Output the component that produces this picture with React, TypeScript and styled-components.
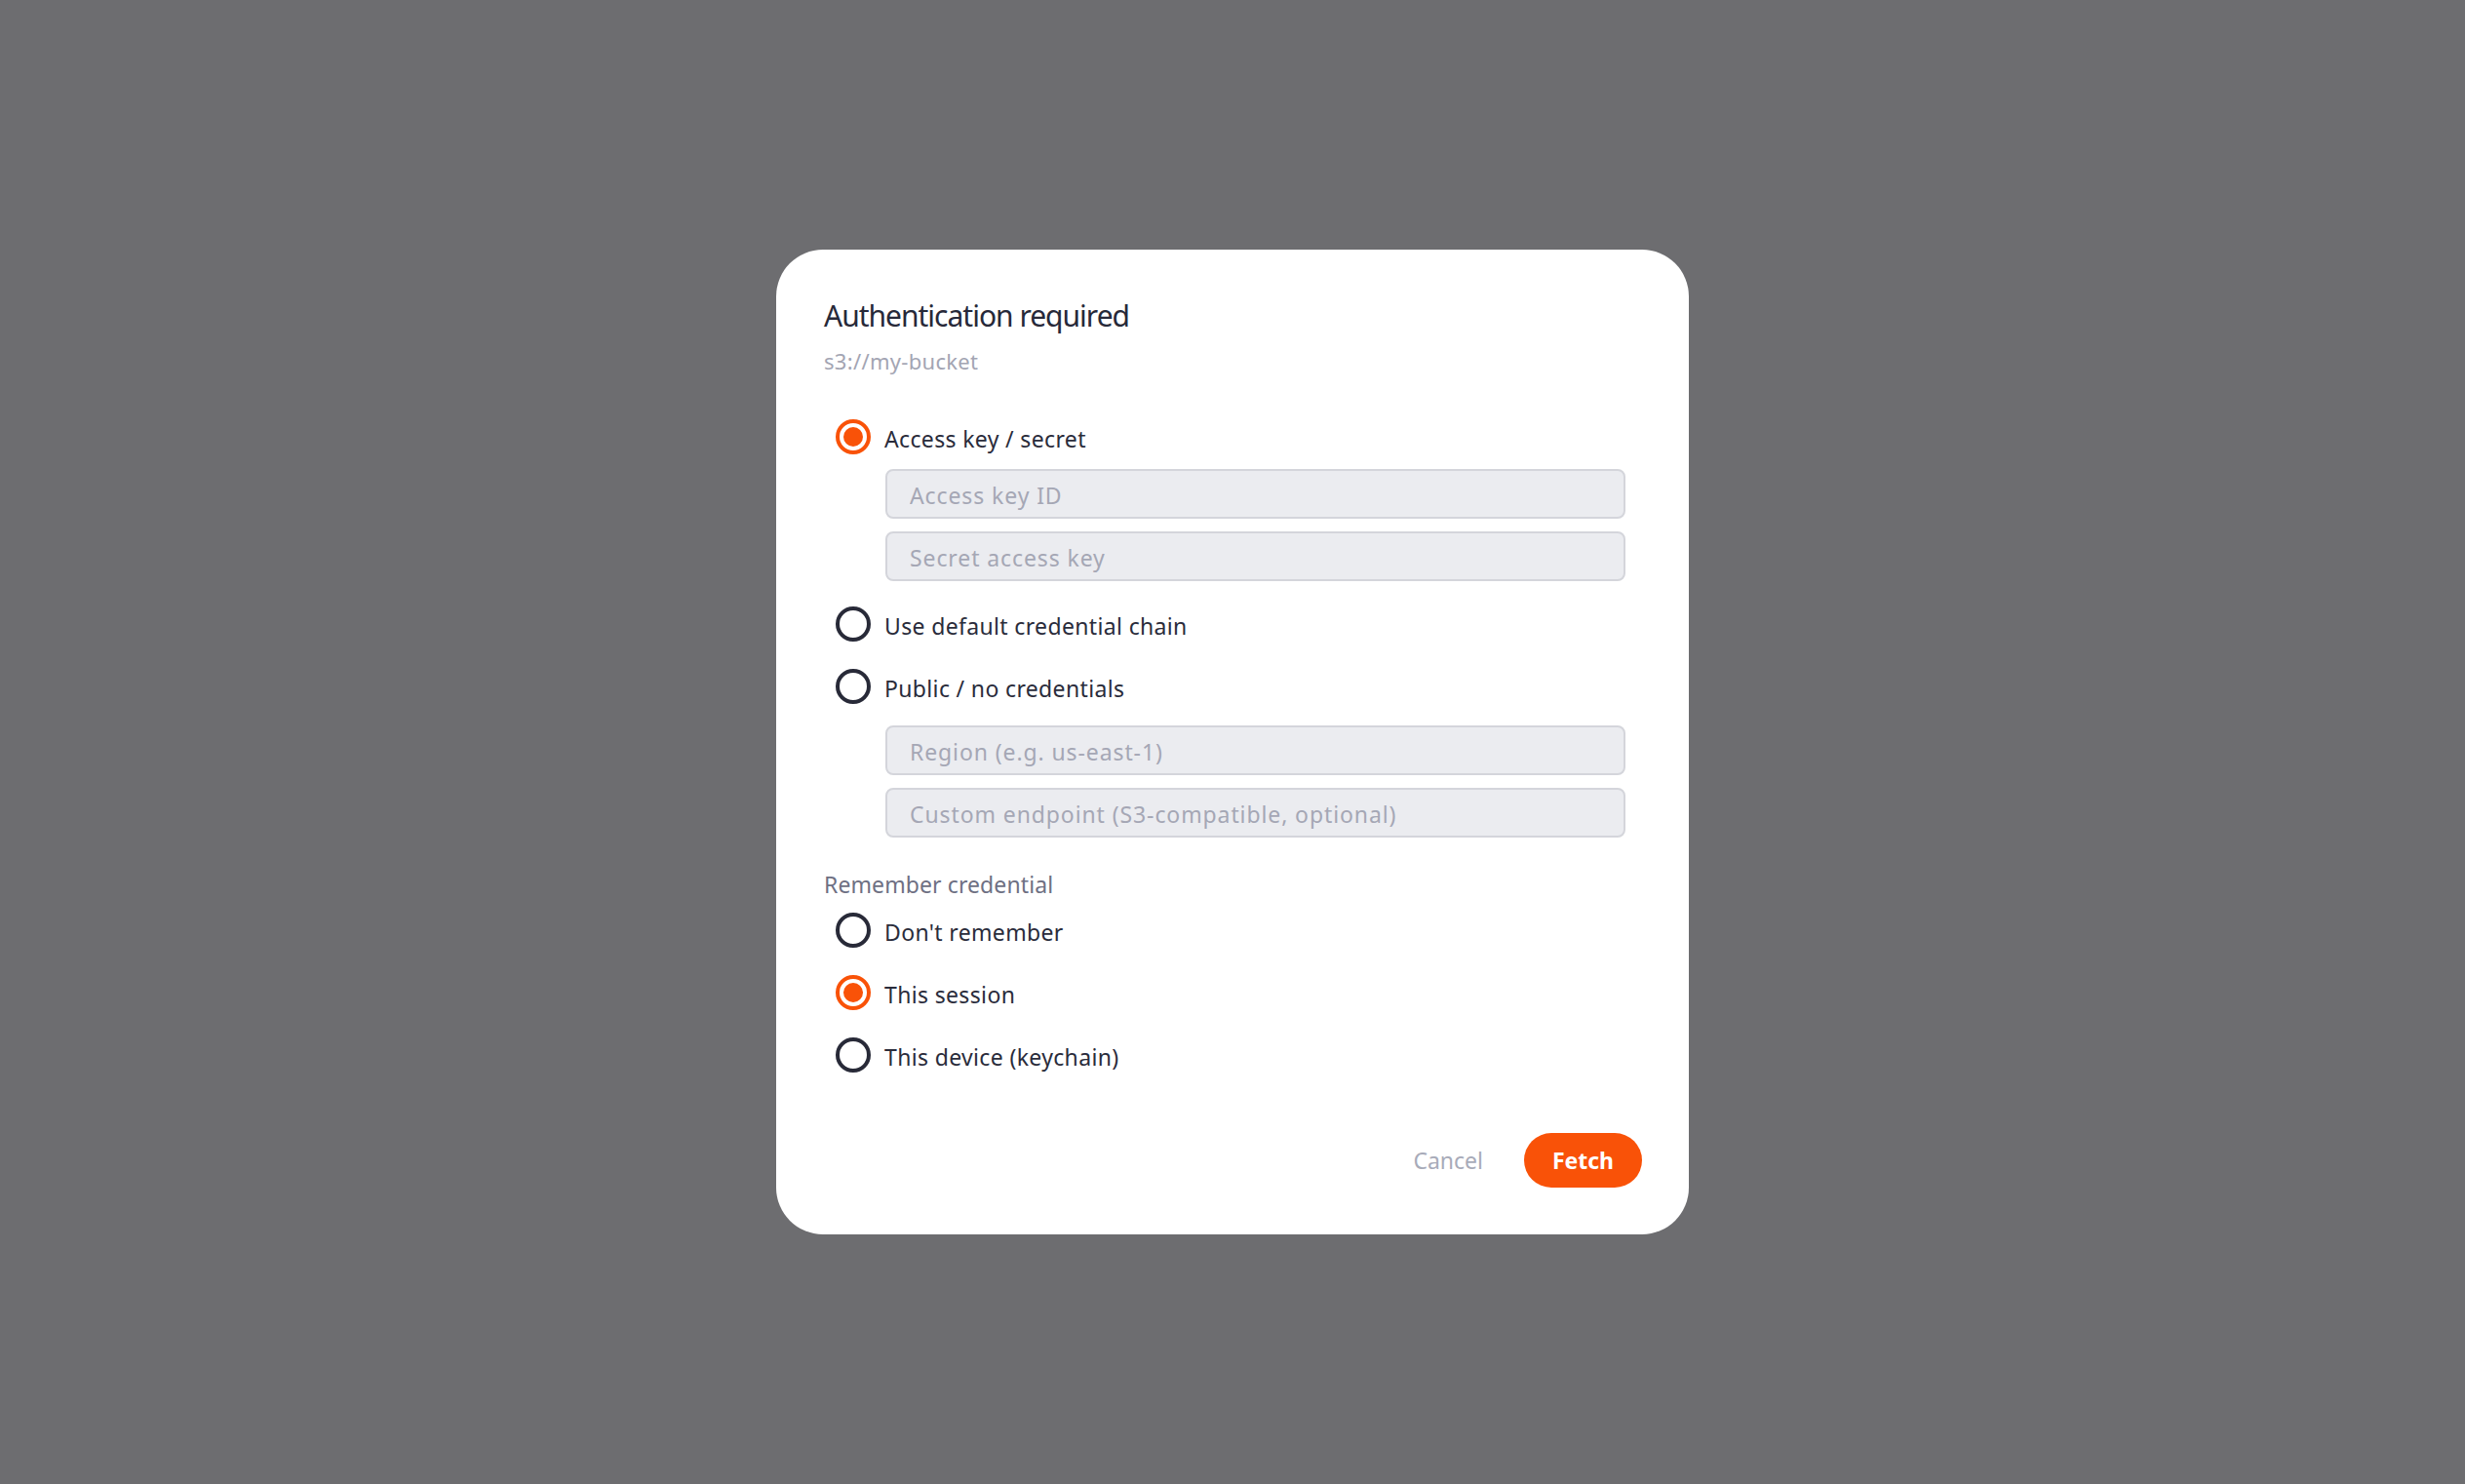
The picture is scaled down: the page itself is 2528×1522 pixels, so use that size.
import React, { FC, useState } from "react";
import styled, { createGlobalStyle } from "styled-components";

const GlobalStyle = createGlobalStyle`
    html, body {
        margin: 0;
        padding: 0;
        height: 100%;
    }
    body {
        background: #6d6d70;
        font-family: "Noto Sans", "Open Sans", sans-serif;
    }
    #root {
        min-height: 100vh;
        display: flex;
        align-items: center;
        justify-content: center;
    }
`;

const Dialog = styled.div`
    width: 936px;
    box-sizing: border-box;
    padding: 48px 48px 48px 49px;
    background: #ffffff;
    border-radius: 48px;
    display: flex;
    flex-direction: column;
`;

const Title = styled.h1`
    margin: 0;
    font-size: 30px;
    line-height: 40px;
    font-weight: 400;
    letter-spacing: -1px;
    color: #272939;
`;

const Subtitle = styled.div`
    margin-top: 11px;
    font-size: 22px;
    line-height: 30px;
    letter-spacing: 0.3px;
    color: #a3a5b3;
`;

const Options = styled.div<{ $top: number }>`
    margin-top: ${(p) => p.$top}px;
    display: flex;
    flex-direction: column;
`;

const Row = styled.label<{ $gap?: number }>`
    display: flex;
    align-items: center;
    height: 40px;
    padding-left: 12px;
    margin-top: ${(p) => p.$gap ?? 0}px;
    cursor: pointer;
    font-size: 23px;
    letter-spacing: 0.35px;
    color: #2a2c3b;
`;

const RowText = styled.span`
    margin-top: 4px;
`;

const Radio = styled.span<{ $on: boolean }>`
    width: 36px;
    height: 36px;
    box-sizing: border-box;
    border-radius: 50%;
    border: 4px solid ${(p) => (p.$on ? "#f95208" : "#282a38")};
    display: flex;
    align-items: center;
    justify-content: center;
    margin-right: 14px;
    flex-shrink: 0;

    &::after {
        content: "";
        width: 20px;
        height: 20px;
        border-radius: 50%;
        background: ${(p) => (p.$on ? "#f95208" : "transparent")};
    }
`;

const Fields = styled.div<{ $top: number }>`
    display: flex;
    flex-direction: column;
    gap: 13px;
    margin: ${(p) => p.$top}px 17px 0 63px;
`;

const Input = styled.input`
    height: 51px;
    box-sizing: border-box;
    border: 2px solid #d4d5db;
    border-radius: 8px;
    background: #ebecf0;
    padding: 2px 23px 0;
    font-family: inherit;
    font-size: 23px;
    letter-spacing: 0.9px;
    color: #262838;
    outline: none;

    &::placeholder {
        color: #a5a7b5;
    }
`;

const SectionLabel = styled.div`
    margin-top: 32px;
    font-size: 23px;
    line-height: 32px;
    letter-spacing: 0.1px;
    color: #6e7083;
`;

const Footer = styled.div`
    margin-top: 60px;
    display: flex;
    justify-content: flex-end;
    align-items: center;
    gap: 42px;
`;

const CancelButton = styled.button`
    border: none;
    background: none;
    padding: 0;
    font-family: inherit;
    font-size: 23px;
    color: #a8abb9;
    cursor: pointer;
`;

const FetchButton = styled.button`
    height: 56px;
    width: 121px;
    border: none;
    border-radius: 28px;
    background: #f95208;
    color: #ffffff;
    font-family: inherit;
    font-size: 23px;
    font-weight: 700;
    cursor: pointer;
`;

const authOptions = [
    { id: "key", label: "Access key / secret" },
    { id: "chain", label: "Use default credential chain" },
    { id: "public", label: "Public / no credentials" },
];

const rememberOptions = [
    { id: "none", label: "Don't remember" },
    { id: "session", label: "This session" },
    { id: "device", label: "This device (keychain)" },
];

const App: FC = () => {
    const [auth, setAuth] = useState("key");
    const [remember, setRemember] = useState("session");

    return <>
        <GlobalStyle />
        <Dialog>
            <Title>Authentication required</Title>
            <Subtitle>s3://my-bucket</Subtitle>
            <Options $top={43}>
                <Row onClick={() => setAuth("key")}>
                    <Radio $on={auth === "key"} />
                    <RowText>{authOptions[0].label}</RowText>
                </Row>
                <Fields $top={13}>
                    <Input placeholder="Access key ID" />
                    <Input placeholder="Secret access key" type="password" />
                </Fields>
                {authOptions.slice(1).map((o) => (
                    <Row key={o.id} $gap={24} onClick={() => setAuth(o.id)}>
                        <Radio $on={auth === o.id} />
                        <RowText>{o.label}</RowText>
                    </Row>
                ))}
                <Fields $top={20}>
                    <Input placeholder="Region (e.g. us-east-1)" />
                    <Input placeholder="Custom endpoint (S3-compatible, optional)" />
                </Fields>
            </Options>
            <SectionLabel>Remember credential</SectionLabel>
            <Options $top={11}>
                {rememberOptions.map((o, i) => (
                    <Row key={o.id} $gap={i === 0 ? 0 : 24} onClick={() => setRemember(o.id)}>
                        <Radio $on={remember === o.id} />
                        <RowText>{o.label}</RowText>
                    </Row>
                ))}
            </Options>
            <Footer>
                <CancelButton>Cancel</CancelButton>
                <FetchButton>Fetch</FetchButton>
            </Footer>
        </Dialog>
    </>;
};

export default App;
